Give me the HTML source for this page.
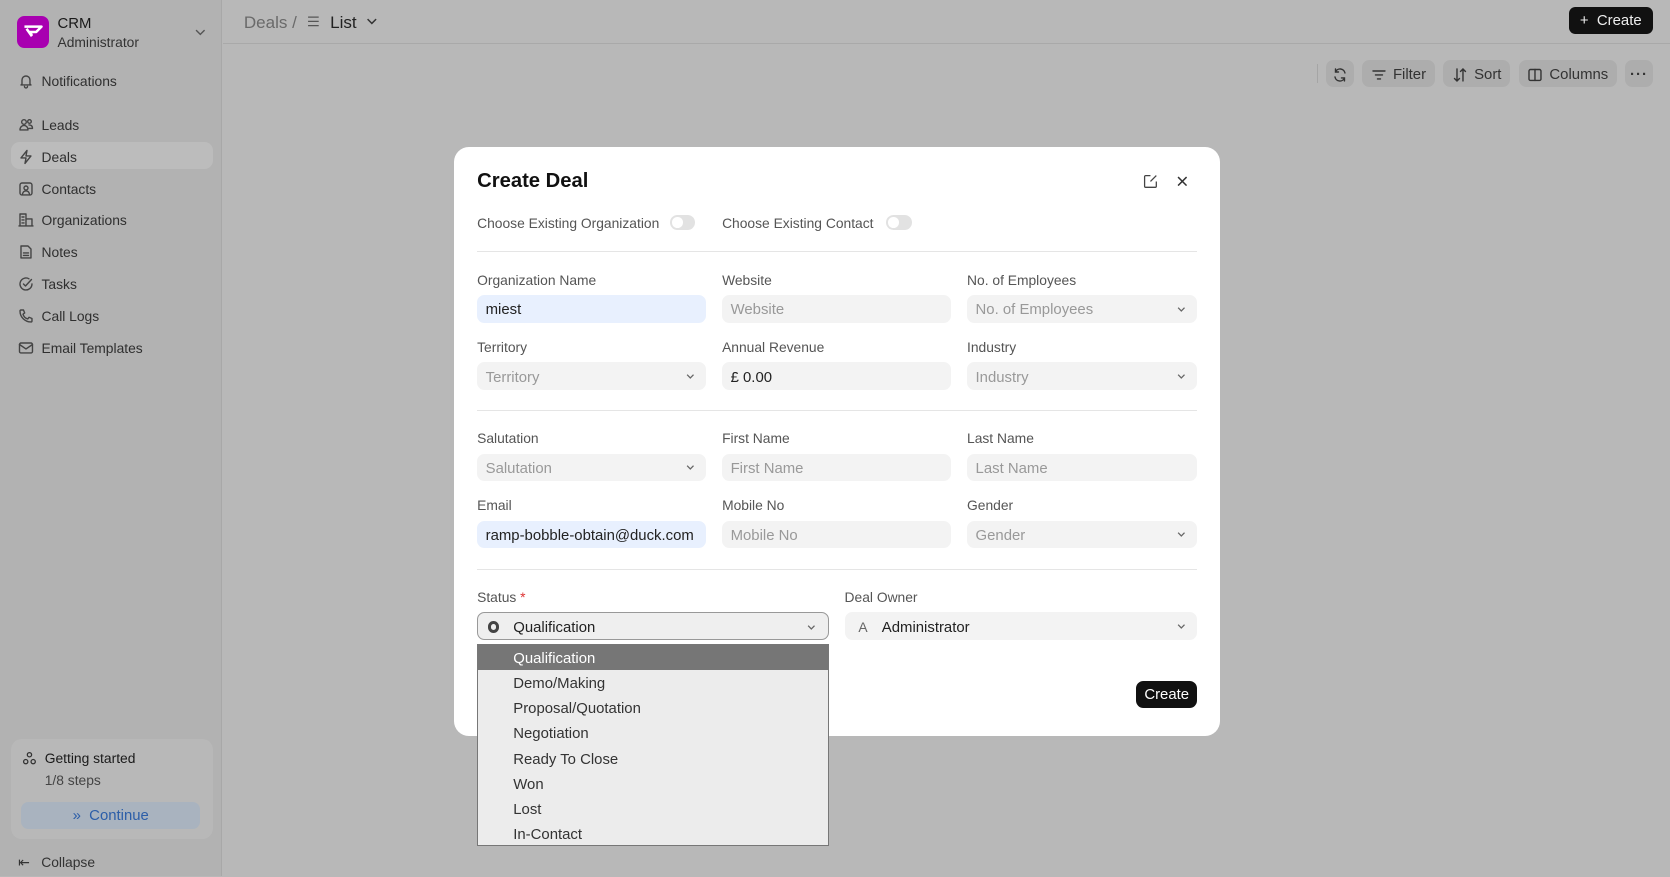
<!DOCTYPE html>
<html><head><meta charset="utf-8"><style>
*{box-sizing:border-box;margin:0;padding:0}
html,body{width:1670px;height:877px;overflow:hidden}
body{font-family:"Liberation Sans",sans-serif;background:#b8b8b8;color:#1a1a1a}
#root{width:1568px;height:823px;position:relative;zoom:1.065}
.abs{position:absolute}
.side{left:0;top:0;width:208px;height:823px;background:#b2b2b2;border-right:1px solid #a8a8a8}
.nav{position:absolute;left:10px;width:190px;height:26px;display:flex;align-items:center;padding-left:7px;padding-top:2px;font-size:13px;color:#2f2f2f}
.nav svg{width:15px;height:15px;margin-right:7px;stroke:#444;fill:none;stroke-width:1.4;stroke-linecap:round;stroke-linejoin:round}
.btn{position:absolute;top:56px;height:26px;background:#adadad;border-radius:7px;display:flex;align-items:center;justify-content:center;font-size:14px;color:#333;gap:6px;padding-top:2px}
.btn svg{width:15px;height:15px;stroke:#333;fill:none;stroke-width:1.4;stroke-linecap:round}
.modal{left:426px;top:138px;width:720px;height:553px;background:#fff;border-radius:14px}
.lbl{position:absolute;font-size:13px;color:#555}
.inp{position:absolute;height:26px;width:215px;background:#f3f3f3;border-radius:7px;font-size:14px;color:#999;padding-left:8px;padding-top:3px;display:flex;align-items:center}
.inp.v{color:#222}
.inp.blue{background:#e8f0fe;color:#222}
.chev{position:absolute;right:10px;top:8px;width:10px;height:10px}
.hr{position:absolute;left:448px;width:676px;height:1px;background:#e5e5e5}
.tog{position:absolute;width:24px;height:14px;border-radius:7px;background:#e2e2e2}
.tog:after{content:"";position:absolute;left:2px;top:2px;width:10px;height:10px;border-radius:50%;background:#fff}
.dd{left:448px;top:605px;width:330px;height:189px;background:#ececec;border:1px solid #777}
.dd div{height:23.5px;line-height:23.5px;padding-left:33px;padding-top:2px;font-size:14px;color:#333}
</style></head><body><div id="root">
<div class="abs side">
 <div class="abs" style="left:16px;top:15px;width:30px;height:30px;border-radius:7px;background:#a800b0">
  <svg width="30" height="30" viewBox="0 0 30 30" fill="none" stroke="#fff" stroke-width="2.4" stroke-linejoin="round"><path d="M7 10h16l-5 5h-6l2 3M9 12l5 7"/></svg>
 </div>
 <div class="abs" style="left:54px;top:15px;font-size:14px;color:#1a1a1a">CRM</div>
 <div class="abs" style="left:54px;top:32px;font-size:13px;color:#333">Administrator</div>
 <svg class="abs" style="left:183px;top:26px" width="10" height="8" viewBox="0 0 10 8" fill="none" stroke="#555" stroke-width="1.3"><path d="M1 2l4 4 4-4"/></svg>
 <div class="nav" style="top:62px"><svg viewBox="0 0 16 16"><path d="M4 11V7a4 4 0 018 0v4l1 1H3zM6.5 13.5a1.5 1.5 0 003 0"/></svg>Notifications</div>
 <div class="nav" style="top:103px"><svg viewBox="0 0 16 16"><circle cx="6" cy="5" r="2.3"/><path d="M2 13c0-3 2-4.5 4-4.5s4 1.5 4 4.5z"/><circle cx="11.5" cy="4.5" r="1.8"/><path d="M11 8c2 0 3.5 1 3.5 3.5H11"/></svg>Leads</div>
 <div class="nav" style="top:133px;background:#bcbcbc;border-radius:8px"><svg viewBox="0 0 16 16"><path d="M9 1.5L3 9h5l-1 5.5L13 7H8z"/></svg>Deals</div>
 <div class="nav" style="top:163px"><svg viewBox="0 0 16 16"><rect x="2" y="2" width="12" height="12" rx="2"/><circle cx="8" cy="7" r="2"/><path d="M4.5 13c.5-2 2-3 3.5-3s3 1 3.5 3"/></svg>Contacts</div>
 <div class="nav" style="top:193px"><svg viewBox="0 0 16 16"><path d="M2 14V2h6v12M8 7h6v7M1 14h14M4 5h2M4 8h2M4 11h2"/></svg>Organizations</div>
 <div class="nav" style="top:223px"><svg viewBox="0 0 16 16"><path d="M3 2h7l3 3v9H3zM5.5 9h5M5.5 11.5h5"/></svg>Notes</div>
 <div class="nav" style="top:253px"><svg viewBox="0 0 16 16"><path d="M14 8a6 6 0 11-3-5.2M5.5 8l2 2 6-6.5"/></svg>Tasks</div>
 <div class="nav" style="top:283px"><svg viewBox="0 0 16 16"><path d="M3 2h2.5l1.2 3-1.7 1.2a7 7 0 004.8 4.8L11 9.3l3 1.2V13a1 1 0 01-1 1A11 11 0 012 3a1 1 0 011-1z"/></svg>Call Logs</div>
 <div class="nav" style="top:313px"><svg viewBox="0 0 16 16"><rect x="1.5" y="3" width="13" height="10" rx="1.5"/><path d="M1.5 4.5L8 9l6.5-4.5"/></svg>Email Templates</div>
 <div class="abs" style="left:10px;top:694px;width:190px;height:94px;background:#b8b8b8;border-radius:10px">
  <svg class="abs" style="left:11px;top:11px" width="14" height="14" viewBox="0 0 14 14" fill="none" stroke="#333" stroke-width="1.2"><circle cx="7" cy="3.5" r="2"/><circle cx="3.5" cy="10" r="2"/><circle cx="10.5" cy="10" r="2"/></svg>
  <div class="abs" style="left:32px;top:10px;font-size:13px;color:#1a1a1a">Getting started</div>
  <div class="abs" style="left:32px;top:31px;font-size:13px;color:#444">1/8 steps</div>
  <div class="abs" style="left:10px;top:59px;width:168px;height:25px;background:#a9b3bf;border-radius:7px;font-size:14px;color:#2c5ea8;text-align:center;line-height:27px">» &nbsp;Continue</div>
 </div>
 <div class="abs" style="left:17px;top:802px;font-size:13px;color:#333">⇤&nbsp;&nbsp; Collapse</div>
</div>
<div class="abs" style="left:209px;top:40px;width:1359px;height:1px;background:#a9a9a9"></div>
<div class="abs" style="left:229px;top:12px;font-size:16px;color:#6a6a6a">Deals /</div>
<svg class="abs" style="left:288px;top:14px" width="12" height="12" viewBox="0 0 12 12" stroke="#555" stroke-width="1.2"><path d="M1 2h10M1 6h10M1 10h10"/></svg>
<div class="abs" style="left:310px;top:12px;font-size:16px;color:#222">List</div>
<svg class="abs" style="left:344px;top:16px" width="11" height="8" viewBox="0 0 11 8" fill="none" stroke="#333" stroke-width="1.4"><path d="M1.5 2l4 4 4-4"/></svg>
<div class="abs" style="left:1473px;top:7px;width:79px;height:25px;background:#111;border-radius:6px;color:#eee;font-size:14px;line-height:27px;text-align:center">+&nbsp; Create</div>
<div class="abs" style="left:1237px;top:60px;width:1px;height:18px;background:#a5a5a5"></div>
<div class="btn" style="left:1245px;width:26px"><svg viewBox="0 0 16 16"><path d="M13 6a5 5 0 00-9.5-1M3 10a5 5 0 009.5 1M3.5 2v3h3M12.5 14v-3h-3"/></svg></div>
<div class="btn" style="left:1279px;width:68px"><svg viewBox="0 0 16 16"><path d="M2 4h12M4.5 8h7M6.5 12h3"/></svg>Filter</div>
<div class="btn" style="left:1355px;width:63px"><svg viewBox="0 0 16 16"><path d="M5 2v12M2.5 11.5L5 14l2.5-2.5M11 14V2M8.5 4.5L11 2l2.5 2.5"/></svg>Sort</div>
<div class="btn" style="left:1426px;width:92px"><svg viewBox="0 0 16 16"><rect x="2" y="2.5" width="12" height="11" rx="1.5"/><path d="M8 2.5v11"/></svg>Columns</div>
<div class="btn" style="left:1526px;width:26px;font-weight:bold;letter-spacing:1px">···</div>

<div class="abs modal"></div>
<div class="abs" style="left:448px;top:160px;font-size:19px;font-weight:600;color:#111">Create Deal</div>
<svg class="abs" style="left:1073px;top:163px" width="14" height="14" viewBox="0 0 14 14" fill="none" stroke="#444" stroke-width="1.2"><path d="M7 1.5H2.5a1 1 0 00-1 1v9a1 1 0 001 1h9a1 1 0 001-1V7M12.5 1.5L7 7"/></svg>
<svg class="abs" style="left:1105px;top:165px" width="10" height="10" viewBox="0 0 10 10" stroke="#333" stroke-width="1.4"><path d="M1 1l8 8M9 1L1 9"/></svg>
<div class="lbl" style="left:448px;top:202px">Choose Existing Organization</div>
<div class="tog" style="left:629px;top:202px"></div>
<div class="lbl" style="left:678px;top:202px">Choose Existing Contact</div>
<div class="tog" style="left:832px;top:202px"></div>
<div class="hr" style="top:236px"></div>

<div class="lbl" style="left:448px;top:255px">Organization Name</div>
<div class="lbl" style="left:678px;top:255px">Website</div>
<div class="lbl" style="left:908px;top:255px">No. of Employees</div>
<div class="inp blue" style="left:448px;top:277px">miest</div>
<div class="inp" style="left:678px;top:277px">Website</div>
<div class="inp" style="left:908px;top:277px;width:216px">No. of Employees<svg class="chev" viewBox="0 0 10 10" fill="none" stroke="#666" stroke-width="1.2"><path d="M2 3.5l3 3 3-3"/></svg></div>
<div class="lbl" style="left:448px;top:318px">Territory</div>
<div class="lbl" style="left:678px;top:318px">Annual Revenue</div>
<div class="lbl" style="left:908px;top:318px">Industry</div>
<div class="inp" style="left:448px;top:340px">Territory<svg class="chev" viewBox="0 0 10 10" fill="none" stroke="#666" stroke-width="1.2"><path d="M2 3.5l3 3 3-3"/></svg></div>
<div class="inp v" style="left:678px;top:340px">£ 0.00</div>
<div class="inp" style="left:908px;top:340px;width:216px">Industry<svg class="chev" viewBox="0 0 10 10" fill="none" stroke="#666" stroke-width="1.2"><path d="M2 3.5l3 3 3-3"/></svg></div>
<div class="hr" style="top:385px"></div>

<div class="lbl" style="left:448px;top:404px">Salutation</div>
<div class="lbl" style="left:678px;top:404px">First Name</div>
<div class="lbl" style="left:908px;top:404px">Last Name</div>
<div class="inp" style="left:448px;top:426px">Salutation<svg class="chev" viewBox="0 0 10 10" fill="none" stroke="#666" stroke-width="1.2"><path d="M2 3.5l3 3 3-3"/></svg></div>
<div class="inp" style="left:678px;top:426px">First Name</div>
<div class="inp" style="left:908px;top:426px;width:216px">Last Name</div>
<div class="lbl" style="left:448px;top:467px">Email</div>
<div class="lbl" style="left:678px;top:467px">Mobile No</div>
<div class="lbl" style="left:908px;top:467px">Gender</div>
<div class="inp blue" style="left:448px;top:489px;font-size:14px;white-space:nowrap;overflow:hidden">ramp-bobble-obtain@duck.com</div>
<div class="inp" style="left:678px;top:489px">Mobile No</div>
<div class="inp" style="left:908px;top:489px;width:216px">Gender<svg class="chev" viewBox="0 0 10 10" fill="none" stroke="#666" stroke-width="1.2"><path d="M2 3.5l3 3 3-3"/></svg></div>
<div class="hr" style="top:534px"></div>

<div class="lbl" style="left:448px;top:553px">Status <span style="color:#d33">*</span></div>
<div class="lbl" style="left:793px;top:553px">Deal Owner</div>
<div class="inp v" style="left:448px;top:575px;width:330px;border:1px solid #999;background:#efefef;padding-left:33px"><span class="abs" style="left:9px;top:7px;width:11px;height:11px;border-radius:50%;border:3px solid #444"></span>Qualification<svg class="chev" viewBox="0 0 10 10" fill="none" stroke="#666" stroke-width="1.2"><path d="M2 3.5l3 3 3-3"/></svg></div>
<div class="inp v" style="left:793px;top:575px;width:331px;padding-left:35px"><span class="abs" style="left:13px;top:6px;font-size:13px;color:#666">A</span>Administrator<svg class="chev" viewBox="0 0 10 10" fill="none" stroke="#666" stroke-width="1.2"><path d="M2 3.5l3 3 3-3"/></svg></div>
<div class="abs" style="left:1067px;top:639px;width:57px;height:26px;background:#111;color:#fff;border-radius:7px;font-size:14px;line-height:28px;text-align:center">Create</div>

<div class="abs dd">
 <div style="background:#767676;color:#fff">Qualification</div>
 <div>Demo/Making</div><div>Proposal/Quotation</div><div>Negotiation</div><div>Ready To Close</div><div>Won</div><div>Lost</div><div>In-Contact</div>
</div>
</div></body></html>
